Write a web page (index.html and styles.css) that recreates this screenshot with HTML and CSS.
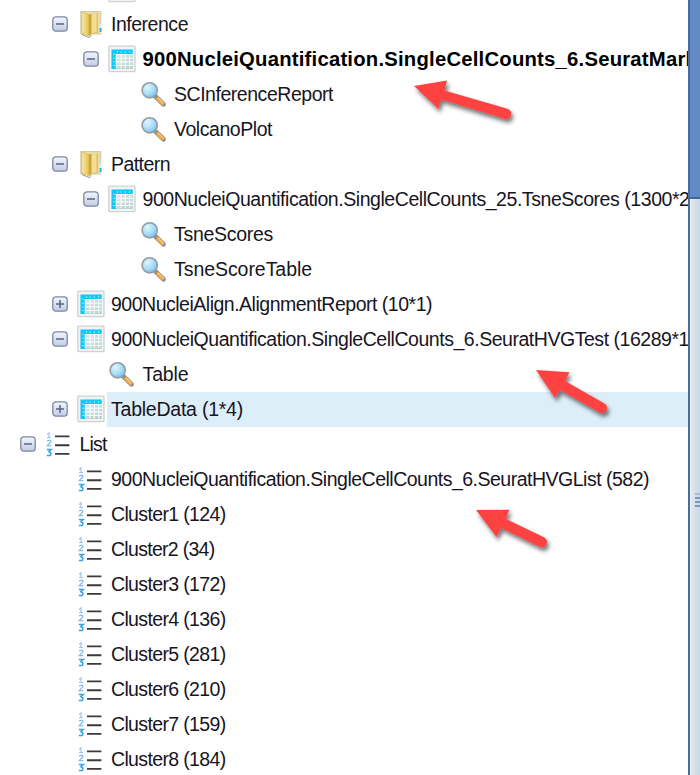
FILE: index.html
```html
<!DOCTYPE html>
<html lang="en">
<head>
<meta charset="utf-8">
<title>Solution Explorer</title>
<link rel="stylesheet" href="styles.css">
</head>
<body>
<svg class="defs" width="0" height="0" aria-hidden="true">
  <defs>
    <linearGradient id="gToggle" x1="0" y1="0" x2="0" y2="1"><stop offset="0" stop-color="#f4f6fb"/><stop offset="1" stop-color="#c3cbdf"/></linearGradient>
    <linearGradient id="gFolder" x1="0" y1="0" x2="1" y2="0"><stop offset="0" stop-color="#fbe9a0"/><stop offset="1" stop-color="#e3c255"/></linearGradient>
    <linearGradient id="gCells" x1="0" y1="0" x2="1" y2="1"><stop offset="0" stop-color="#e8f4f2"/><stop offset="1" stop-color="#b3cbc9"/></linearGradient>
    <radialGradient id="gLens" cx=".35" cy=".3" r=".75"><stop offset="0" stop-color="#dff5ff"/><stop offset=".6" stop-color="#a5dcf7"/><stop offset="1" stop-color="#79bfe6"/></radialGradient>
    <symbol id="minus" viewBox="0 0 16 16"><rect x=".8" y=".8" width="14.4" height="14.4" rx="3.2" fill="url(#gToggle)" stroke="#7b88a8" stroke-width="1.3"/><path d="M4 8h8" stroke="#53648c" stroke-width="1.5"/></symbol>
    <symbol id="plus" viewBox="0 0 16 16"><rect x=".8" y=".8" width="14.4" height="14.4" rx="3.2" fill="url(#gToggle)" stroke="#7b88a8" stroke-width="1.3"/><path d="M4 8h8M8 4v8" stroke="#53648c" stroke-width="1.5"/></symbol>
    <symbol id="folder" viewBox="0 0 28 28">
      <path d="M3.800 1.500h20v22.500h-20z" fill="#eadca8" stroke="#c9c3b0" stroke-width=".9"/>
      <path d="M12 5l9-2v20l-9 1.500z" fill="#e0c163"/><path d="M13.500 5l6-2v19l-6 1.500z" fill="#f3df94"/>
      <path d="M4.500 2l7.500 2.500v21.500l-7.500-3z" fill="url(#gFolder)" stroke="#cba945" stroke-width=".5"/>
      <path d="M12 4.500l2.500-.5v19L12 26z" fill="#cda436"/><path d="M5 24.500l7.500 3.200 1.800-3" fill="none" stroke="#9b9785" stroke-width="1"/>
      <path d="M22.500 13l2.800 1.500v7l-2.800 2z" fill="#e7eff0"/><path d="M22.500 18h2v4h-2z" fill="#27b6ed"/>
    </symbol>
    <symbol id="table" viewBox="0 0 28 28">
      <rect x=".8" y="1.200" width="26.200" height="25.400" rx=".8" fill="#f1f4f4" stroke="#cfd1d2" stroke-width="1.300"/>
      <rect x="3.500" y="4.500" width="21.200" height="19.500" fill="url(#gCells)"/>
      <path d="M3.500 4.500h21.200v4.600H8.200V24H3.500z" fill="#10c8fa"/>
      <path d="M8.300 9.300v14M13.100 9.300v14M17.400 9.300v14M21.700 9.300v14M8.300 9.500h16.400M8.300 13.300h16.400M8.300 16.900h16.400M8.300 20.500h16.400" stroke="#f8ffff" stroke-width="1.100"/>
      <path d="M5 9.200h2.500M5 13.200h2.500M5 16.900h2.500M5 20.500h2.500M9.500 6v2M13.100 6v2M17.400 6v2M21.700 6v2" stroke="#8be6fb" stroke-width="1"/>
    </symbol>
    <symbol id="lens" viewBox="0 0 28 28">
      <path d="M15 16l8.500 8.300" stroke="#929292" stroke-width="4.800" stroke-linecap="round"/>
      <path d="M17 18l6.500 6.300" stroke="#f6ad3c" stroke-width="3.200"/><path d="M18.200 17.900l5.500 5.300" stroke="#ffdc91" stroke-width="1"/>
      <circle cx="9.700" cy="10.300" r="7.600" fill="url(#gLens)" stroke="#929da5" stroke-width="1.600"/>
    </symbol>
    <symbol id="list" viewBox="0 0 28 28">
      <path d="M10 6.400h14.400M10 15.200h14.400M10 23.900h14.400" stroke="#3b3b3b" stroke-width="1.900"/>
      <g fill="none" stroke-width="1.200"><path d="M2 7.500h4M4 7.500V2.900L2.200 4.500" stroke="#9dc4f0"/><path d="M2 10.800l3-.6 1 1.500-3.800 4H6.300" stroke="#82baf0"/><path d="M1.800 19.500h4.400L3.800 21.700 6 23 5.400 25.500H1.800" stroke="#37a2e6" stroke-width="1.500"/></g>
    </symbol>
    <filter id="shadow" x="-20%" y="-20%" width="150%" height="160%"><feDropShadow dx="2" dy="3.5" stdDeviation="2" flood-color="#000" flood-opacity=".55"/></filter>
  </defs>
</svg>
<main class="window">
  <section class="tree" id="tree"></section>
  <aside class="side">
    <div class="side-header"></div>
    <div class="splitter"><div class="grip"><i></i><i></i><i></i><i></i></div></div>
  </aside>
  <svg class="arrows" width="700" height="775" viewBox="0 0 700 775">
    <g fill="#fe4343" filter="url(#shadow)">
      <path d="M414 86l33-5.500-2.500 10 63 18.200a5.100 5.100 0 0 1-3 10L441 99.500l-2.500 9.500z"/>
      <path d="M536 370l33.500 2.200-4.500 8.800 39.500 22.600a5.100 5.100 0 0 1-5 9L560 390l-5 8z"/>
      <path d="M476 510l33.500-.2-4 9 38.500 18.500a5.100 5.100 0 0 1-4.500 9.500L501 528l-4.500 9z"/>
    </g>
  </svg>
</main>
<script src="tree.js"></script>
</body>
</html>
```
FILE: styles.css
```css
* { box-sizing: border-box; }
body { margin: 0; overflow: hidden; background: #fff; }
.defs { position: absolute; }
.window { position: relative; display: flex; width: 700px; height: 775px; overflow: hidden; }
.tree { width: 688px; margin-top: -28px; overflow: hidden; flex: none; font: 19.5px/35px "Liberation Sans", Arial, sans-serif; color: #171523; }
.row { display: flex; align-items: center; height: 35px; white-space: pre; padding-left: 20px; }
.level-1 { padding-left: 51.5px; }
.level-2 { padding-left: 83px; }
.level-3 { padding-left: 114.5px; }
.toggle { width: 16px; height: 16px; flex: none; margin: 0 9px 2px 0; }
.icon { width: 28px; height: 28px; flex: none; margin: 0 2px 2px 0; }
.label { flex: 1 0 auto; height: 35px; padding-left: 4.5px; }
.bold { font-weight: 700; font-size: 20.3px; color: #000; }
.selected .label { background: #dceef8; }
.side { width: 12px; flex: none; display: flex; flex-direction: column; border-left: 2px solid #456da4; background: #d5dfea; }
.side-header { height: 199px; flex: none; background: #628bc5; border-bottom: 2px solid #3f679f; }
.splitter { flex: 1; border-left: 1px solid #f1f5fa; background: linear-gradient(90deg, #e0e7f0, #ccd7e5); padding-top: 294px; }
.grip { margin-left: 4px; display: grid; gap: 2px; }
.grip i { height: 2px; background: #7b96ba; }
.grip i:first-child { background: #a9bbd3; }
.arrows { position: absolute; inset: 0; }
```
FILE: tree.js
```js
// level, toggle, icon, label, fitted width in px, optional clipped tail, modifier
const rows = [
  [2, "", "table", "AlignmentReport (1*1)", 160],
  [1, "minus", "folder", "Inference", 77],
  [2, "minus", "table", "900NucleiQuantification.SingleCellCounts_6.SeuratMar", 543, "k", "bold"],
  [3, "", "lens", "SCInferenceReport", 159],
  [3, "", "lens", "VolcanoPlot", 98],
  [1, "minus", "folder", "Pattern", 59],
  [2, "minus", "table", "900NucleiQuantification.SingleCellCounts_25.TsneScores (1300*2", 547],
  [3, "", "lens", "TsneScores", 99],
  [3, "", "lens", "TsneScoreTable", 138],
  [1, "plus", "table", "900NucleiAlign.AlignmentReport (10*1)", 321],
  [1, "minus", "table", "900NucleiQuantification.SingleCellCounts_6.SeuratHVGTest (16289*1", 578],
  [2, "", "lens", "Table", 46],
  [1, "plus", "table", "TableData (1*4)", 132, "", "selected"],
  [0, "minus", "list", "List", 27],
  [1, "", "list", "900NucleiQuantification.SingleCellCounts_6.SeuratHVGList (582)", 538],
  [1, "", "list", "Cluster1 (124)", 114.5],
  [1, "", "list", "Cluster2 (34)", 103.5],
  [1, "", "list", "Cluster3 (172)", 114.5],
  [1, "", "list", "Cluster4 (136)", 114.5],
  [1, "", "list", "Cluster5 (281)", 114.5],
  [1, "", "list", "Cluster6 (210)", 114.5],
  [1, "", "list", "Cluster7 (159)", 114.5],
  [1, "", "list", "Cluster8 (184)", 114.5]
];
const use = (cls, id) => `<svg class="${cls}">${id ? `<use href="#${id}"/>` : ""}</svg>`;
const tree = document.getElementById("tree");
for (const [level, toggle, icon, text, width, tail = "", mod = ""] of rows) {
  const row = document.createElement("div");
  row.className = `row level-${level} ${mod}`;
  row.innerHTML = use("toggle", toggle) + use("icon", icon) + `<div class="label"><span>${text}</span>${tail}</div>`;
  tree.append(row);
  const span = row.querySelector("span");
  span.style.letterSpacing = (width - span.getBoundingClientRect().width) / text.length + "px";
}
```
